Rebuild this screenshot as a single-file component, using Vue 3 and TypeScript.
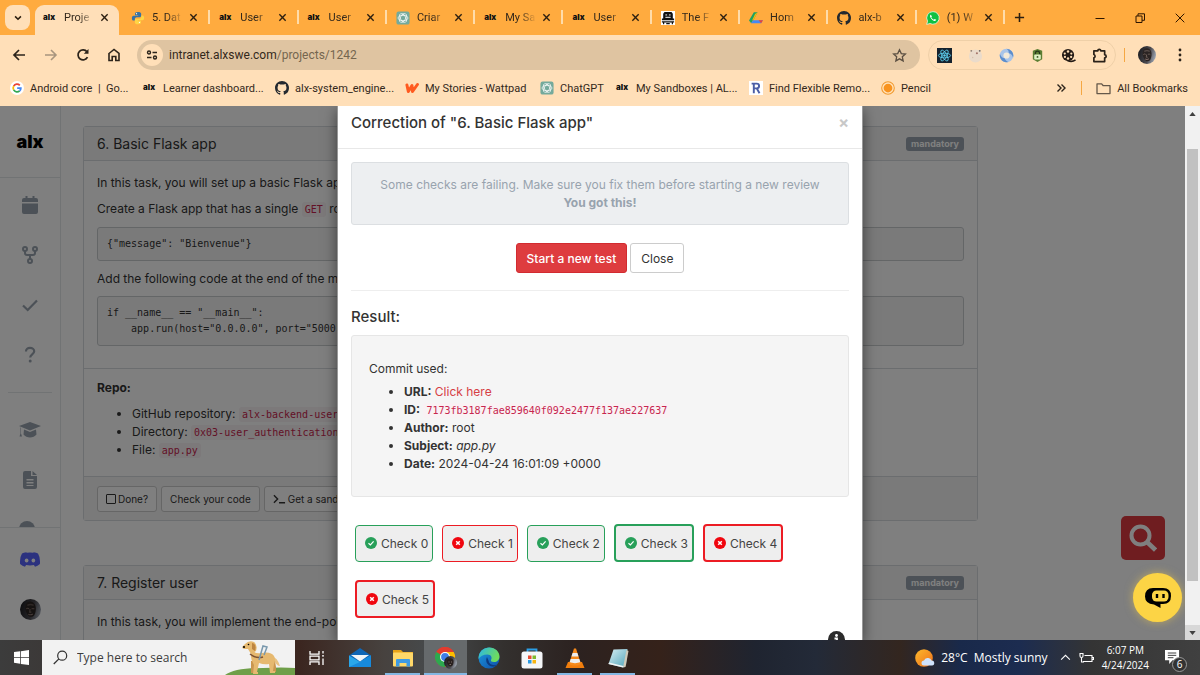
<script setup lang="ts">
import { ref } from 'vue'

interface Tab { icon: string; title: string }
interface Check { label: string; ok: boolean; strong: boolean }

const tabs: Tab[] = [
  { icon: 'alx', title: 'Proje' },
  { icon: 'python', title: '5. Dat' },
  { icon: 'alx', title: 'User' },
  { icon: 'alx', title: 'User' },
  { icon: 'gpt', title: 'Criar' },
  { icon: 'alx', title: 'My Sa' },
  { icon: 'alx', title: 'User' },
  { icon: 'robot', title: 'The F' },
  { icon: 'drive', title: 'Hom' },
  { icon: 'github', title: 'alx-b' },
  { icon: 'whatsapp', title: '(1) W' },
]

const bookmarks: Tab[] = [
  { icon: 'google', title: 'Android core  |  Go...' },
  { icon: 'alx', title: 'Learner dashboard...' },
  { icon: 'github', title: 'alx-system_engine...' },
  { icon: 'wattpad', title: 'My Stories - Wattpad' },
  { icon: 'gpt', title: 'ChatGPT' },
  { icon: 'alx', title: 'My Sandboxes | AL...' },
  { icon: 'remote', title: 'Find Flexible Remo...' },
  { icon: 'pencil', title: 'Pencil' },
]

const extensions: string[] = ['react', 'cookie', 'swirl', 'lock', 'reel', 'puzzle']

const checks: Check[] = [
  { label: 'Check 0', ok: true, strong: false },
  { label: 'Check 1', ok: false, strong: false },
  { label: 'Check 2', ok: true, strong: false },
  { label: 'Check 3', ok: true, strong: true },
  { label: 'Check 4', ok: false, strong: true },
  { label: 'Check 5', ok: false, strong: true },
]

const apps = [
  { icon: 'taskview', name: 'Task View', state: '' },
  { icon: 'mail', name: 'Mail', state: '' },
  { icon: 'explorer', name: 'File Explorer', state: 'open' },
  { icon: 'chrome', name: 'Chrome', state: 'open active' },
  { icon: 'edge', name: 'Edge', state: '' },
  { icon: 'store', name: 'Store', state: '' },
  { icon: 'vlc', name: 'VLC', state: 'open' },
  { icon: 'notepad', name: 'Notepad', state: 'open' },
]

const address = ref('')
const search = ref('')
</script>

<template>
  <div class="screen">
    <svg class="defs" aria-hidden="true">
      <defs>
        <linearGradient id="edgeA" x1="0" y1="0" x2="1" y2="0.4">
          <stop offset="0" stop-color="#2ab6e8" /><stop offset="1" stop-color="#6fdc5c" />
        </linearGradient>
        <linearGradient id="edgeB" x1="0" y1="0" x2="1" y2="1">
          <stop offset="0" stop-color="#1c9be0" /><stop offset="1" stop-color="#0f4ea8" />
        </linearGradient>
        <linearGradient id="sun" x1="0" y1="0" x2="1" y2="1">
          <stop offset="0" stop-color="#fdb92c" /><stop offset="1" stop-color="#ef6f1b" />
        </linearGradient>
        <linearGradient id="note" x1="0" y1="0" x2="1" y2="1">
          <stop offset="0" stop-color="#d9f0f5" /><stop offset="1" stop-color="#4fa3b8" />
        </linearGradient>
        <linearGradient id="face" x1="0" y1="0.3" x2="1" y2="0.6">
          <stop offset="0" stop-color="#1b1b1f" /><stop offset="0.6" stop-color="#4b4a50" /><stop offset="1" stop-color="#a2aab6" />
        </linearGradient>
      </defs>
      <symbol id="python" viewBox="0 0 16 16">
        <path d="M7.900 1C5.500 1 4.600 1.900 4.600 3v1.900h3.600v.6H2.900C1.600 5.500 1 6.700 1 8.200s.7 2.700 1.900 2.700h1.500V9.200c0-1.200 1-2 2.100-2H10c1 0 1.600-.8 1.600-1.700V3c0-1.300-1.400-2-3.700-2z" fill="#3673a5" />
        <path d="M8.100 15c2.400 0 3.300-.9 3.300-2v-1.900H7.800v-.6h5.300c1.300 0 1.900-1.200 1.900-2.700s-.7-2.700-1.900-2.700h-1.300v1.700c0 1.200-1 2-2.100 2H6c-1 0-1.600.8-1.600 1.700V13c0 1.300 1.400 2 3.700 2z" fill="#ffd545" />
        <circle cx="6.300" cy="3" r=".7" fill="#fff" /><circle cx="9.700" cy="13" r=".7" fill="#fff" />
      </symbol>
      <symbol id="gpt" viewBox="0 0 16 16">
        <rect x=".5" y=".5" width="15" height="15" rx="2.500" fill="#74aa9c" />
        <g fill="none" stroke="#fff" stroke-width=".8">
          <ellipse cx="8" cy="8" rx="5.600" ry="3" /><ellipse cx="8" cy="8" rx="5.600" ry="3" transform="rotate(60 8 8)" /><ellipse cx="8" cy="8" rx="5.600" ry="3" transform="rotate(120 8 8)" />
        </g>
      </symbol>
      <symbol id="robot" viewBox="0 0 16 16">
        <rect x="0" y="0" width="16" height="16" fill="#fff" />
        <path d="M4 1h8l1.500 2v5.500h1.500v2H1v-2h1.500V3z" fill="#111" />
        <path d="M5 4.500h2M9 4.500h2M5 7.200h6" stroke="#fff" stroke-width="1.100" />
        <path d="M1 12.500h14M3 12.500V15M13 12.500V15M6 14.500h4" stroke="#111" stroke-width="1.400" />
      </symbol>
      <symbol id="drive" viewBox="0 0 16 16">
        <path d="M5.500 1.500h4.300L5 10.500 2.500 14 0 10.800z" fill="#1ea362" />
        <path d="M9.800 1.500L5 10.500l-1.500.3L7 3.500z" fill="#fbbc04" />
        <path d="M4.700 10.500H16L13.800 14H2.300z" fill="#4688f4" />
        <path d="M11 10.500h5L13.800 14z" fill="#ea4335" />
      </symbol>
      <symbol id="github" viewBox="0 0 16 16">
        <path d="M8 0C3.580 0 0 3.580 0 8c0 3.540 2.290 6.530 5.470 7.590.4.070.55-.17.55-.38 0-.19-.01-.82-.01-1.490-2.010.37-2.530-.49-2.690-.94-.09-.23-.48-.94-.82-1.130-.28-.15-.68-.52-.01-.53.63-.01 1.080.58 1.230.82.72 1.210 1.870.87 2.330.66.07-.52.28-.87.51-1.070-1.780-.2-3.640-.89-3.640-3.950 0-.87.31-1.590.82-2.150-.08-.2-.36-1.020.08-2.120 0 0 .67-.21 2.200.82.64-.18 1.320-.27 2-.27s1.360.09 2 .27c1.530-1.040 2.200-.82 2.200-.82.44 1.100.16 1.920.08 2.120.51.56.82 1.270.82 2.150 0 3.070-1.870 3.750-3.650 3.950.29.25.54.73.54 1.480 0 1.070-.01 1.930-.01 2.200 0 .21.15.46.55.38A8.010 8.010 0 0 0 16 8c0-4.420-3.580-8-8-8z" fill="#24292f" />
      </symbol>
      <symbol id="whatsapp" viewBox="0 0 16 16">
        <path d="M8 .7a7.200 7.200 0 0 0-6.200 10.900L.8 15.300l3.800-1A7.200 7.200 0 1 0 8 .7z" fill="#0fc143" stroke="#fff" stroke-width=".8" />
        <path d="M5.600 4.200c-.8.300-1.300 1.300-.9 2.500.7 2.200 2.500 3.900 4.600 4.600 1.200.3 2.200-.2 2.400-1.200l-1.800-1.100-.9.900C7.800 9.500 6.600 8.400 6 7.100l.8-.9z" fill="#fff" />
      </symbol>
      <symbol id="google" viewBox="0 0 16 16">
        <circle cx="8" cy="8" r="8" fill="#fff" />
        <g fill="none" stroke-width="2">
          <path d="M11.200 4.900A4.400 4.400 0 0 0 4.200 5.800" stroke="#ea4335" /><path d="M4.200 5.800a4.400 4.400 0 0 0 0 4.400" stroke="#fbbc04" /><path d="M4.200 10.200a4.400 4.400 0 0 0 6.800 1.100" stroke="#34a853" /><path d="M11 11.300A4.400 4.400 0 0 0 12.400 8H8.200" stroke="#4285f4" />
        </g>
      </symbol>
      <symbol id="wattpad" viewBox="0 0 16 16">
        <path d="M2.200 4.500L3.800 12 8 5.200l.6 6.800 5.600-8" fill="none" stroke="#ff5a1f" stroke-width="3.400" stroke-linejoin="round" stroke-linecap="round" />
      </symbol>
      <symbol id="remote" viewBox="0 0 16 16">
        <rect x="0" y="0" width="16" height="16" fill="#fff" />
        <path d="M5.500 14V3h3.300a2.700 2.700 0 0 1 0 5.400H5.500M8.800 8.400L12 14M3 3h3" fill="none" stroke="#4b5ea6" stroke-width="2.200" />
      </symbol>
      <symbol id="pencil" viewBox="0 0 16 16">
        <circle cx="8" cy="8" r="7.200" fill="#ffe3bd" stroke="#f29a2e" stroke-width="1.200" /><circle cx="8" cy="8" r="5" fill="#f8931f" />
      </symbol>
      <symbol id="react" viewBox="0 0 16 16">
        <rect x="0" y="0" width="16" height="16" fill="#15222e" />
        <g fill="none" stroke="#5fd3f3" stroke-width=".9"><ellipse cx="8" cy="8" rx="6.500" ry="2.500" /><ellipse cx="8" cy="8" rx="6.500" ry="2.500" transform="rotate(60 8 8)" /><ellipse cx="8" cy="8" rx="6.500" ry="2.500" transform="rotate(120 8 8)" /></g>
        <circle cx="8" cy="8" r="1.300" fill="#5fd3f3" />
      </symbol>
      <symbol id="cookie" viewBox="0 0 16 16">
        <circle cx="8" cy="8.500" r="7" fill="#eadbcb" /><circle cx="3.500" cy="3" r="1" fill="#8c7f78" /><circle cx="9.500" cy="5.500" r="1.100" fill="#a4756a" /><circle cx="12.500" cy="3" r="1" fill="#6d6a6a" /><circle cx="5" cy="10" r=".8" fill="#d7c2ad" />
      </symbol>
      <symbol id="swirl" viewBox="0 0 16 16">
        <circle cx="8" cy="8" r="7.300" fill="#a9c4e8" /><circle cx="8" cy="8" r="3.300" fill="#f4ead9" />
        <path d="M8 .7A7.300 7.300 0 0 1 15 10c-1-3-3-4-4.500-4.300C10.500 3.500 10 2 8 .7zM1 6.500c1 3 3 4.500 5 4.500 1 2.500 2.500 3.500 4 4A7.300 7.300 0 0 1 1 6.500z" fill="#5d8dcb" />
      </symbol>
      <symbol id="lock" viewBox="0 0 16 16">
        <path d="M3 3l5-2 5 2v9l-5 3-5-3z" fill="#5c7e33" /><path d="M5.800 7V5.500a2.200 2.200 0 0 1 4.400 0V7" fill="none" stroke="#26351a" stroke-width="1.300" /><rect x="4.500" y="7" width="7" height="5.200" rx="1" fill="#dff0c4" /><circle cx="8" cy="9.500" r="1" fill="#3a5520" />
      </symbol>
      <symbol id="reel" viewBox="0 0 16 16">
        <circle cx="7.500" cy="7.500" r="6.500" fill="#241b16" /><path d="M7 13.300c3 1.500 6 1.200 8.500-.7" stroke="#241b16" stroke-width="1.800" fill="none" />
        <g fill="#ffdfb8"><circle cx="7.500" cy="3.800" r="1.300" /><circle cx="7.500" cy="11.200" r="1.300" /><circle cx="4" cy="5.900" r="1.200" /><circle cx="11" cy="5.900" r="1.200" /><circle cx="4.200" cy="9.500" r="1.200" /><circle cx="10.800" cy="9.500" r="1.200" /></g>
      </symbol>
      <symbol id="puzzle" viewBox="0 0 16 16">
        <path d="M2 3h4.200a1.600 1.600 0 0 1 3.200 0H13.500v4.200a1.600 1.600 0 0 1 0 3.200V14.500H2v-4a1.900 1.900 0 0 0 0-3.600z" fill="none" stroke="#2a2118" stroke-width="1.800" stroke-linejoin="round" />
      </symbol>
      <symbol id="avatar" viewBox="0 0 20 20">
        <circle cx="10" cy="10" r="10" fill="url(#face)" />
        <path d="M5 8c0-4 2.500-6 5.500-5.500S15.500 6 15 10.500s-2 6.500-4.500 6.500S5 12.500 5 8z" fill="#2b2423" />
        <path d="M6 9.500c1-1 2-.6 2.600 0M11 9.500c1-.7 2-.6 2.700.2M9.600 9.500l-.4 3h1.600" fill="none" stroke="#75655f" stroke-width="1" />
        <path d="M8 14.500q2 1.200 4.200-.2" fill="none" stroke="#8c7770" stroke-width="1" />
        <path d="M7 6q3-1.600 6 0" fill="none" stroke="#5b4f4b" stroke-width="1.400" />
      </symbol>
      <symbol id="ok" viewBox="0 0 12 12"><circle cx="6" cy="6" r="6" fill="#28a05a" /><path d="M3.500 6.200l1.900 1.700 3.200-3.500" fill="none" stroke="#fff" stroke-width="1.200" /></symbol>
      <symbol id="fail" viewBox="0 0 12 12"><circle cx="6" cy="6" r="6" fill="#f0060f" /><path d="M4.200 4.200l3.600 3.600M7.800 4.200L4.200 7.800" stroke="#fff" stroke-width="1.500" /></symbol>
      <symbol id="taskview" viewBox="0 0 22 22">
        <path d="M4 4v3.200h9V4M4 18v-3.200h9V18M4 9.200h9v3.600H4zM17 4v2.500M17 11.500V18M16 8.800h2" fill="none" stroke="#fff" stroke-width="1.300" />
      </symbol>
      <symbol id="mail" viewBox="0 0 22 22">
        <path d="M0 8.500L11 1l11 7.500V20H0z" fill="#1066b5" /><path d="M0 8.500l11 6.500 11-6.500V20H0z" fill="#2aa6ea" /><path d="M22 8.500V20H0l11-5z" fill="#1789dc" /><path d="M2 8h18l-9 6.500z" fill="#f1f5f8" />
      </symbol>
      <symbol id="explorer" viewBox="0 0 22 22">
        <path d="M1 3h8l2 2h10v4H1z" fill="#e8a317" /><rect x="1" y="5.500" width="20" height="14" rx="1" fill="#ffd869" /><path d="M4 19.500v-6.500q0-1 1-1h12q1 0 1 1v6.500h-3.500v-3.500h-7v3.500z" fill="#3f9be3" />
      </symbol>
      <symbol id="chrome" viewBox="0 0 22 22">
        <circle cx="10" cy="10" r="10" fill="#e33b2e" /><path d="M10 10L1.300 5A10 10 0 0 0 10 20l4.500-8z" fill="#2da94f" /><path d="M10 20a10 10 0 0 0 8.700-15H10l4.300 7.500z" fill="#fdbd00" /><path d="M1.300 5A10 10 0 0 1 18.700 5H10z" fill="#e33b2e" />
        <circle cx="10" cy="10" r="5" fill="#fff" /><circle cx="10" cy="10" r="3.900" fill="#3f7ee8" /><circle cx="15.500" cy="15.500" r="6.500" fill="url(#face)" /><path d="M12 15a3.300 3.300 0 1 1 6.500 0c0 3-1.500 4.500-3 4.500s-3.500-2-3.500-4.500z" fill="#29211f" /><path d="M13.500 15h1M16 15h1M14.500 17.500h1.500" stroke="#94847d" stroke-width=".8" />
      </symbol>
      <symbol id="edge" viewBox="0 0 22 22">
        <circle cx="11" cy="11" r="10.500" fill="url(#edgeB)" />
        <path d="M.6 10C1.500 4 6 .5 11.300.5 17.500.5 21.500 5 21.500 9.500c0 3.500-2.500 5.500-5.500 5.500-2.500 0-3.500-1-3-2 1.500-2.500 0-5.500-3.500-5.500C5 7.500 2 9.500.6 12z" fill="url(#edgeA)" />
        <path d="M9 10c-2 4 0 8.500 5 9.500 2 .3 4-.5 5.500-2-4 1.500-8.500.5-9-4z" fill="#0c3b80" />
      </symbol>
      <symbol id="store" viewBox="0 0 22 22">
        <path d="M6.500 6V2.500h9V6" fill="none" stroke="#2b9fe6" stroke-width="1.800" /><rect x=".5" y="4.500" width="21" height="17" rx="2.500" fill="#f4f6f8" />
        <path d="M7 8.500h3.500V12H7z" fill="#e84b31" /><path d="M11.500 8.500H15V12h-3.500z" fill="#7cb92e" /><path d="M7 13h3.500v3.500H7z" fill="#2a9be4" /><path d="M11.500 13H15v3.500h-3.500z" fill="#f7b511" />
      </symbol>
      <symbol id="vlc" viewBox="0 0 22 22">
        <path d="M4 15h14l2.500 6h-19z" fill="#f07d0c" /><path d="M10 1.500h2L17 17c-3 2-9 2-12 0z" fill="#f68a1c" /><path d="M8.600 6h4.800l1.100 3.500h-7zM6.700 12h8.600l1 3c-3 1.500-7.600 1.500-10.600 0z" fill="#eceef0" />
      </symbol>
      <symbol id="notepad" viewBox="0 0 22 22">
        <path d="M6.500 2.500L20.500 2 19 18l-3 2.500L1.500 17z" fill="url(#note)" /><path d="M19.500 3l2 1-3 16-2.500.5z" fill="#cfc9b8" /><path d="M1.500 17l14.500 3.500.5-1.500L2 15.500z" fill="#f2f4f4" />
      </symbol>
    </svg>

    <header class="browser">
      <div class="tabstrip">
        <button class="tabsearch" aria-label="Search tabs"><svg viewBox="0 0 12 12" width="10" height="10"><path d="M2.500 4L6 7.500 9.500 4" fill="none" stroke="#2c1f10" stroke-width="1.900" /></svg></button>
        <nav class="tabs" aria-label="Tabs">
          <div v-for="(t, i) in tabs" :key="i" class="tab" :class="{ current: i === 0 }">
            <span v-if="t.icon === 'alx'" class="alx fav">alx</span>
            <svg v-else class="fav"><use :href="'#' + t.icon" /></svg>
            <span class="tabtitle">{{ t.title }}</span>
            <button class="plain" aria-label="Close tab"><svg viewBox="0 0 10 10" width="9" height="9"><path d="M1.500 1.500l7 7M8.500 1.500l-7 7" stroke="#2c1f10" stroke-width="1.500" /></svg></button>
          </div>
        </nav>
        <button class="plain newtab" aria-label="New tab"><svg viewBox="0 0 12 12" width="11" height="11"><path d="M6 1v10M1 6h10" stroke="#2c1f10" stroke-width="1.700" /></svg></button>
        <div class="winctl">
          <button class="plain" aria-label="Minimize"><svg viewBox="0 0 10 10" width="10" height="10"><path d="M.5 5.500h9" stroke="#2c1500" /></svg></button>
          <button class="plain" aria-label="Restore"><svg viewBox="0 0 10 10" width="10" height="10"><path d="M1 3h6v6.500H1zM3 3V.8h6.500v6.500H7" fill="none" stroke="#2c1500" /></svg></button>
          <button class="plain" aria-label="Close"><svg viewBox="0 0 10 10" width="10" height="10"><path d="M.7.7l8.600 8.600M9.300.7L.7 9.300" stroke="#2c1500" /></svg></button>
        </div>
      </div>

      <div class="toolbar">
        <div class="navbtns">
          <button class="plain" aria-label="Back"><svg viewBox="0 0 14 14" width="14" height="14"><path d="M13 7H2M7 2L2 7l5 5" fill="none" stroke="#2c241b" stroke-width="1.700" /></svg></button>
          <button class="plain" aria-label="Forward"><svg viewBox="0 0 14 14" width="14" height="14"><path d="M1 7h11M7 2l5 5-5 5" fill="none" stroke="#a8957e" stroke-width="1.600" /></svg></button>
          <button class="plain" aria-label="Reload"><svg viewBox="0 0 14 14" width="14" height="14"><path d="M11.500 9.200A5 5 0 1 1 11 3.800" fill="none" stroke="#2c241b" stroke-width="1.700" /><path d="M12.500 1v4.700H7.800z" fill="#2c241b" /></svg></button>
          <button class="plain" aria-label="Home"><svg viewBox="0 0 14 14" width="14" height="14"><path d="M2 5.500L7 1.500l5 4v7H8.800V8.500H5.200v4H2z" fill="none" stroke="#2c241b" stroke-width="1.600" /></svg></button>
        </div>
        <div class="omnibox">
          <button class="siteinfo" aria-label="Site information"><svg viewBox="0 0 12 12" width="12" height="12"><g fill="none" stroke="#2c241b" stroke-width="1.400"><circle cx="3" cy="3.500" r="1.500" /><path d="M6.500 3.500H11M1 8.500h4.500" /><circle cx="9" cy="8.500" r="1.500" /></g></svg></button>
          <label class="url"><span class="host">intranet.alxswe.com</span>/projects/1242<input v-model="address" class="ghost" aria-label="Address" /></label>
          <button class="plain star" aria-label="Bookmark"><svg viewBox="0 0 16 16" width="15" height="15"><path d="M8 1.800l1.900 4.100 4.400.5-3.300 3 .9 4.400L8 11.600l-3.900 2.200.9-4.400-3.300-3 4.400-.5z" fill="none" stroke="#5b4f42" stroke-width="1.400" /></svg></button>
        </div>
        <div class="exts">
          <button v-for="e in extensions" :key="e" class="plain" :aria-label="e"><svg width="15" height="15"><use :href="'#' + e" /></svg></button>
        </div>
        <span class="bar"></span>
        <button class="plain profile" aria-label="Profile"><svg width="18" height="18"><use href="#avatar" /></svg></button>
        <button class="plain kebab" aria-label="Menu"><svg viewBox="0 0 4 14" width="4" height="14"><g fill="#2c241b"><circle cx="2" cy="2" r="1.400" /><circle cx="2" cy="7" r="1.400" /><circle cx="2" cy="12" r="1.400" /></g></svg></button>
      </div>

      <nav class="bookmarks" aria-label="Bookmarks">
        <div class="marks">
          <a v-for="(b, i) in bookmarks" :key="i" href="#" class="mark">
            <span v-if="b.icon === 'alx'" class="alx fav">alx</span>
            <svg v-else class="fav"><use :href="'#' + b.icon" /></svg>
            <span class="pre">{{ b.title }}</span>
          </a>
        </div>
        <button class="plain more" aria-label="More bookmarks"><svg viewBox="0 0 10 10" width="10" height="10"><path d="M1.500 1.500L5 5 1.500 8.500M5.500 1.500L9 5 5.500 8.500" fill="none" stroke="#2c241b" stroke-width="1.400" /></svg></button>
        <span class="bar"></span>
        <a href="#" class="mark all"><svg viewBox="0 0 16 14" width="15" height="13"><path d="M1 2h5l1.500 1.800H15V12.500H1z" fill="none" stroke="#65584a" stroke-width="1.400" stroke-linejoin="round" /></svg>All Bookmarks</a>
      </nav>
    </header>

    <div class="page">
      <div class="view">
        <aside class="side">
          <div class="brand alx">alx</div>
          <div class="sideicons">
            <a href="#" aria-label="Planning"><svg viewBox="0 0 16 18" width="16" height="18"><path d="M3.500 0h2v2h5V0h2v2H14a2 2 0 0 1 2 2v2H0V4a2 2 0 0 1 2-2h1.500zM0 7.500h16V16a2 2 0 0 1-2 2H2a2 2 0 0 1-2-2z" /></svg></a>
            <a href="#" aria-label="Projects"><svg viewBox="0 0 16 18" width="16" height="18"><g fill="none" stroke="#98a3ae" stroke-width="2"><circle cx="3" cy="3" r="2" /><circle cx="13" cy="3" r="2" /><circle cx="8" cy="15" r="2" /><path d="M3 5v2q0 2 2 2h6q2 0 2-2V5M8 9v4" /></g></svg></a>
            <a href="#" aria-label="Reviews"><svg viewBox="0 0 16 18" width="16" height="18"><path d="M1 9.500l4.700 4.500L15 4.500" fill="none" stroke="#98a3ae" stroke-width="2.200" /></svg></a>
            <a href="#" aria-label="Help"><svg viewBox="0 0 16 18" width="16" height="18"><path d="M4 5.500C4 3 5.700 1.800 8 1.800s4.200 1.400 4.200 3.500c0 3-4 3.200-4 6.200" fill="none" stroke="#98a3ae" stroke-width="2.200" /><circle cx="8.200" cy="15" r="1.500" /></svg></a>
          </div>
          <hr class="siderule" />
          <div class="sideicons lower">
            <a href="#" aria-label="Curriculum"><svg viewBox="0 0 22 18" width="22" height="18"><path d="M11 1l11 4-11 4.500L0 5zM5 8.500l6 2.500 6-2.500 .5 5q-2.500 3-6.500 3t-6.500-3zM2 6.500v6l1 3H.5l1-3v-6z" /></svg></a>
            <a href="#" aria-label="Concepts"><svg viewBox="0 0 14 18" width="14" height="18"><path d="M2 0h6v5h6v11a2 2 0 0 1-2 2H2a2 2 0 0 1-2-2V2a2 2 0 0 1 2-2zM9.500 0L14 4H9.500zM3.500 8v1.500h7V8zm0 3v1.500h7V11zm0 3v1h7v-1z" fill-rule="evenodd" /></svg></a>
            <a href="#" aria-label="Conferences"><svg viewBox="0 0 22 18" width="22" height="18"><circle cx="8" cy="8" r="8" /><circle cx="16" cy="12" r="6" /></svg></a>
          </div>
          <div class="sidefoot">
            <a href="#" aria-label="Discord"><svg viewBox="0 0 22 16" width="20" height="15"><path d="M7.500.5L6.800 0Q4 .5 2.200 1.500-.5 6 .1 13q2.500 2.200 5.400 3l1.200-2q4.300 1 8.600 0l1.200 2q2.900-.8 5.400-3 .6-7-2.100-11.500Q18 .5 15.200 0l-.7.500Q11 0 7.500.5z" fill="#5865ff" /><ellipse cx="7.300" cy="9" rx="2" ry="2.200" fill="#fff" /><ellipse cx="14.700" cy="9" rx="2" ry="2.200" fill="#fff" /></svg></a>
            <a href="#" aria-label="Profile"><svg width="21" height="21"><use href="#avatar" /></svg></a>
          </div>
        </aside>

        <main class="tasks">
          <section class="card">
            <div class="cardhead"><h3>6. Basic Flask app</h3><span class="badge">mandatory</span></div>
            <div class="cardbody">
              <p>In this task, you will set up a basic Flask app.</p>
              <p>Create a Flask app that has a single <code>GET</code> route</p>
              <pre>{"message": "Bienvenue"}</pre>
              <p class="late">Add the following code at the end of the module:</p>
              <pre>if __name__ == "__main__":
    app.run(host="0.0.0.0", port="5000")</pre>
            </div>
            <div class="repo">
              <strong>Repo:</strong>
              <ul>
                <li>GitHub repository: <code>alx-backend-user-data</code></li>
                <li>Directory: <code>0x03-user_authentication_service</code></li>
                <li>File: <code>app.py</code></li>
              </ul>
            </div>
            <div class="cardfoot">
              <label class="small"><input type="checkbox" />Done?</label>
              <button class="small">Check your code</button>
              <button class="small"><svg viewBox="0 0 14 10" width="13" height="10"><path d="M1 1l4 4-4 4M6.500 9H13" fill="none" stroke="#333" stroke-width="1.500" /></svg>Get a sandbox</button>
            </div>
          </section>
          <section class="card">
            <div class="cardhead"><h3>7. Register user</h3><span class="badge">mandatory</span></div>
            <div class="cardbody"><p>In this task, you will implement the end-point to register a user.</p></div>
          </section>
        </main>
        <button class="find" aria-label="Search"><svg viewBox="0 0 28 28" width="28" height="28"><circle cx="11.500" cy="11.500" r="9" fill="none" stroke="#fff" stroke-width="4" /><path d="M18 18l8.500 8" stroke="#fff" stroke-width="4.500" /></svg></button>
      </div>

      <div class="scroll" aria-hidden="true">
        <span class="arrow"><svg viewBox="0 0 8 5" width="7" height="4"><path d="M4 0l4 5H0z" fill="#404040" /></svg></span>
        <span class="rail"><span class="thumb"></span></span>
        <span class="arrow down"><svg viewBox="0 0 8 5" width="7" height="4"><path d="M0 0h8L4 5z" fill="#404040" /></svg></span>
      </div>

      <div class="overlay">
        <div class="modal" role="dialog" aria-labelledby="mtitle">
          <div class="mhead"><h2 id="mtitle">Correction of "6. Basic Flask app"</h2><button class="plain mclose" aria-label="Close">×</button></div>
          <div class="mbody">
            <div class="alert">Some checks are failing. Make sure you fix them before starting a new review<br /><strong>You got this!</strong></div>
            <div class="actions"><button class="btn primary">Start a new test</button><button class="btn">Close</button></div>
            <hr />
            <h3>Result:</h3>
            <div class="well">
              <span>Commit used:</span>
              <ul>
                <li><strong>URL:</strong> <a href="#">Click here</a></li>
                <li><strong>ID:</strong> <code>7173fb3187fae859640f092e2477f137ae227637</code></li>
                <li><strong>Author:</strong> root</li>
                <li><strong>Subject:</strong> <em>app.py</em></li>
                <li><strong>Date:</strong> 2024-04-24 16:01:09 +0000</li>
              </ul>
            </div>
            <div class="checks">
              <button v-for="c in checks" :key="c.label" class="check" :class="{ ok: c.ok, strong: c.strong }">
                <svg width="12" height="12"><use :href="c.ok ? '#ok' : '#fail'" /></svg>{{ c.label }}
              </button>
            </div>
          </div>
          <button class="info" aria-label="Information"><svg viewBox="0 0 17 17" width="17" height="17"><circle cx="8.500" cy="4.500" r="1.400" fill="#fff" /><path d="M6.500 7.500h2.500v5M6.500 12.500h5" fill="none" stroke="#fff" stroke-width="1.800" /></svg></button>
        </div>
      </div>
      <button class="chat" aria-label="Chat"><svg viewBox="0 0 26 20" width="26" height="20"><path d="M8 0h10q8 0 8 8t-8 8h-2.500v4L9 16.500Q0 15.500 0 8.500 0 0 8 0z" /><rect x="7" y="2.500" width="16.500" height="11" rx="4.500" fill="#fcd445" /><path d="M12 6v4M18.500 6v4" stroke="#000" stroke-width="2.400" /></svg></button>
    </div>

    <footer class="taskbar">
      <button class="plain start" aria-label="Start"><svg viewBox="0 0 16 16" width="15" height="15"><path d="M0 2.200l6.600-.9v6.200H0zM7.400 1.200L16 0v7.500H7.400zM0 8.300h6.600v6.300L0 13.700zM7.400 8.300H16V16l-8.600-1.200z" fill="#fff" /></svg></button>
      <label class="winsearch">
        <svg viewBox="0 0 16 16" width="15" height="15"><circle cx="9.800" cy="6" r="4.800" fill="none" stroke="#333" stroke-width="1.300" /><path d="M6.300 9.500L.8 15" stroke="#333" stroke-width="1.400" /></svg>
        <input v-model="search" placeholder="Type here to search" aria-label="Type here to search" />
        <svg viewBox="0 0 70 35" width="70" height="35">
          <path d="M0 35Q10 28 38 28q20-1 32 0v7z" fill="#6f9f49" />
          <path d="M46 17q6-1 9 9-3 0-5-4z" fill="#e9c384" />
          <path d="M26 21h5l-1 12h-4zM44 21h6l1 6v5h-4l-1-5z" fill="#c9964f" />
          <path d="M27 10q3 4 9 3 10-2 13 3 2 4 0 8l-1 7h2v2h-5l-1-9q-5 1-10-1l-2 9h1v2h-5l1-9q-5-7-2-15z" fill="#e6b970" />
          <path d="M20 4q4-4 9-2 4 3 2 9l-5 3-3-5-4 0q-3-1-1-3z" fill="#e6b970" />
          <path d="M27 3q5 1 3 8l-3-2z" fill="#bd8440" /><path d="M25 14q6 5 13 3" fill="none" stroke="#7e5232" stroke-width="1.500" />
          <path d="M34 20l4-14 4 1-3 8" fill="none" stroke="#7898ad" stroke-width="1.500" />
          <circle cx="23.500" cy="4.500" r=".8" /><circle cx="19" cy="7" r="1.100" />
        </svg>
      </label>
      <div class="apps">
        <button v-for="a in apps" :key="a.icon" class="plain app" :class="a.state" :aria-label="a.name"><svg width="22" height="22"><use :href="'#' + a.icon" /></svg></button>
      </div>
      <div class="tray">
        <a href="#" class="weather"><svg viewBox="0 0 20 18" width="20" height="18"><circle cx="9" cy="9" r="8.800" fill="url(#sun)" /><path d="M9 16.500a2.500 2.500 0 0 1 0-5q1-3 4-2.500 2.500-.3 3.500 2.500a2.500 2.500 0 0 1 .5 5z" fill="#cfe2fb" /></svg><span>28°C</span><span>Mostly sunny</span></a>
        <button class="plain" aria-label="Show hidden icons"><svg viewBox="0 0 12 8" width="11" height="7"><path d="M1 6.500l5-5 5 5" fill="none" stroke="#fff" stroke-width="1.200" /></svg></button>
        <button class="plain" aria-label="Battery"><svg viewBox="0 0 15 12" width="15" height="12"><path d="M5.500 3.500H13v6H4M13.500 5.500h1v2h-1M2.500 5.500V10H5M1 1.500h3v2.500q0 1.500-1.500 1.500T1 4z" fill="none" stroke="#fff" stroke-width="1.100" /></svg></button>
        <div class="clock"><span>6:07 PM</span><span>4/24/2024</span></div>
        <button class="plain notif" aria-label="Notifications"><svg viewBox="0 0 16 16" width="15" height="15"><path d="M0 0h15v11H8l-3.500 4V11H0z" fill="#fff" /><path d="M3 3.200h9M3 5.700h9M3 8.200h6" stroke="#333" stroke-width="1" /></svg><span class="count">6</span></button>
      </div>
    </footer>
  </div>
</template>

<style>
body { margin: 0; overflow: hidden; }
</style>

<style scoped>
* { box-sizing: border-box; }
.screen { display: flex; flex-direction: column; height: 100vh; overflow: hidden; font-family: Inter, "Liberation Sans", sans-serif; color: #333; }
.defs { position: absolute; width: 0; height: 0; }
svg { display: block; flex: none; }
button { font-family: inherit; cursor: pointer; }
.plain { display: grid; place-items: center; border: 0; padding: 0; background: none; color: inherit; }
a { color: inherit; text-decoration: none; }
.alx { font-family: Inter, sans-serif; font-weight: 900; color: #111; }

/* browser */
.browser { font-family: Roboto, "Open Sans", sans-serif; font-size: 11px; color: #33281b; background: #ffdfb8; flex: none; }
.tabstrip { display: flex; height: 35px; background: #ffab3f; padding-left: 5px; }
.tabsearch { flex: none; width: 25px; height: 25px; margin: 5px 5px 0 0; border: 0; padding: 0; border-radius: 8px; background: #ffdfb8; display: grid; place-items: center; }
.tabs { display: flex; flex: 0 1 971px; min-width: 0; }
.tab { position: relative; display: flex; align-items: center; flex: 1 1 0; min-width: 0; height: 35px; padding: 0 13px 0 8px; }
.tab + .tab::after { content: ""; position: absolute; right: 1px; top: 10px; width: 2px; height: 14px; background: #ffdcaa; }
.tab.current { height: 30px; margin: 5px 4px 0 0; padding: 0 10px 5px 8px; background: #ffdfb8; border-radius: 9px 9px 0 0; flex: 0 0 84px; }
.fav { flex: none; width: 14px; height: 14px; }
.alx.fav { font-size: 8px; line-height: 13px; }
.tabtitle { flex: 1; min-width: 0; margin: 0 4px 0 7px; white-space: nowrap; mask-image: linear-gradient(90deg, #000 45%, transparent 95%); }
.newtab { width: 27px; flex: none; }
.winctl { display: flex; margin-left: auto; flex: none; }
.winctl button { width: 40px; }
.toolbar { display: flex; align-items: center; height: 40px; padding-right: 18px; }
.navbtns { display: flex; padding-left: 3px; margin-right: 8px; }
.navbtns button { width: 32px; height: 30px; }
.navbtns button:nth-child(n+3) { width: 31px; }
.omnibox { display: flex; align-items: center; flex: 1; min-width: 0; height: 30px; border-radius: 15px; background: #dfc4a1; padding: 0 13px 0 4px; }
.siteinfo { width: 22px; height: 22px; flex: none; border: 0; padding: 0; border-radius: 50%; background: #ffdfb8; display: grid; place-items: center; }
.url { display: flex; flex: 1; min-width: 0; margin-left: 6px; font-size: 12px; color: #75664f; white-space: nowrap; }
.host { color: #33281b; }
.ghost { flex: 1; min-width: 0; border: 0; padding: 0; background: none; outline: 0; font: inherit; }
.exts { display: flex; width: 188px; margin: 0 8px 0 8px; height: 30px; border: 1px solid #efd0a8; border-radius: 15px; }
.exts button { flex: 1; }
.bar { width: 1px; height: 14px; background: #f5a742; flex: none; }
.profile { margin: 0 22px 0 13px; }
.bookmarks { display: flex; align-items: center; height: 31px; padding: 0 12px 5px 10px; }
.marks { display: grid; grid-template-columns: 133px 132px 130px 135px 76px 133px 132px auto; flex: 1; min-width: 0; }
.mark { display: flex; align-items: center; gap: 6px; white-space: nowrap; }
.pre { white-space: pre; }
.more { margin-right: 15px; }
.all { margin-left: 14px; }

/* page behind the dialog */
.page { position: relative; display: flex; flex: 1; min-height: 0; overflow: hidden; background: #fff; font-size: 12px; line-height: 18px; }
.view { position: relative; display: flex; flex: 1; min-width: 0; overflow: hidden; }
.side { display: flex; flex-direction: column; flex: none; width: 61px; border-right: 1px solid #e3e6e8; }
.brand { height: 72px; flex: none; border-bottom: 1px solid #e3e6e8; display: grid; place-items: center; font-size: 18px; color: #000; }
.sideicons { display: flex; flex-direction: column; align-items: center; gap: 32px; padding-top: 18px; fill: #98a3ae; }
.siderule { width: 44px; margin: 28px auto 0; border: 0; border-top: 1px solid #e3e6e8; flex: none; }
.lower { padding-top: 28px; flex: 1; min-height: 0; overflow: hidden; }
.sidefoot { flex: none; height: 113px; border-top: 1px solid #e3e6e8; display: flex; flex-direction: column; align-items: center; gap: 32px; padding-top: 24px; }
.tasks { flex: 0 1 939px; min-width: 0; padding: 20px 22px 0; }
.card { border: 1px solid #d7dbde; border-radius: 3px; margin-bottom: 44px; }
.cardhead { display: flex; align-items: center; justify-content: space-between; height: 34px; padding: 0 13px; background: #f5f5f5; border-bottom: 1px solid #d7dbde; }
.cardhead h3 { margin: 0; font-size: 14px; font-weight: 400; }
.badge { background: #98a3ae; color: #fff; border-radius: 3px; font-size: 9px; line-height: 14px; font-weight: 700; padding: 0 5px; }
.cardbody { padding: 13px 13px 22px; }
.card p { margin: 0 0 8px; white-space: nowrap; }
.card .late { margin-top: 9px; }
pre, code { font-family: "DejaVu Sans Mono", monospace; font-size: 10px; }
pre { margin: 0; padding: 8px 9px; border: 1px solid #c9cccf; border-radius: 3px; background: #f5f5f5; line-height: 16px; }
code { color: #c7254e; background: #f9f2f4; border-radius: 3px; padding: 2px 3px; }
.repo { border-top: 1px solid #d7dbde; padding: 10px 13px 17px; white-space: nowrap; }
ul { margin: 8px 0 0; padding-left: 35px; }
li { height: 18px; }
.cardfoot { display: flex; gap: 4px; padding: 9px 13px 8px; background: #f5f5f5; border-top: 1px solid #d7dbde; white-space: nowrap; }
.small { display: flex; align-items: center; gap: 2px; height: 26px; padding: 0 8px; border: 1px solid #ccc; border-radius: 3px; background: #fff; color: #333; font-size: 10px; }
.small input { appearance: none; width: 10px; height: 10px; margin: 0; border: 1px solid #333; border-radius: 1px; }
.find { position: absolute; right: 20px; bottom: 80px; width: 44px; height: 44px; border: 0; padding: 0; border-radius: 5px; background: #de3a40; display: grid; place-items: center; }
.scroll { position: relative; z-index: 2; display: flex; flex-direction: column; flex: none; width: 15px; background: #f1f1f1; }
.arrow { display: grid; place-items: center; height: 15px; flex: none; }
.arrow.down { background: #d8d8d8; }
.rail { flex: 1; display: flex; flex-direction: column; padding: 28px 2px 44px; }
.thumb { flex: 1; background: #c1c1c1; }

/* dialog */
.overlay { position: absolute; inset: 0; background: rgba(0, 0, 0, .5); display: flex; justify-content: center; }
.modal { position: relative; width: 526px; max-width: 100%; background: #fff; border: 1px solid rgba(0, 0, 0, .4); border-width: 0 1px; box-shadow: 0 4px 13px rgba(0, 0, 0, .5); }
.mhead { display: flex; justify-content: space-between; height: 43px; padding: 6px 13px 0; border-bottom: 1px solid #e8e8e8; }
.mhead h2 { margin: 0; font-size: 15px; line-height: 22px; font-weight: 500; }
.mclose { align-self: flex-start; height: 14px; font-size: 16px; font-weight: 700; color: #c8c8c8; }
.mbody { padding: 13px 13px 0; }
.alert { padding: 13px 12px 12px; border: 1px solid #dcdfe2; border-radius: 3px; background: #edeff1; color: #98a3ae; text-align: center; }
.actions { display: flex; justify-content: center; gap: 3px; margin: 18px 0 17px; }
.btn { height: 30px; padding: 0 10px; border: 1px solid #ccc; border-radius: 3px; background: #fff; color: #333; font-size: 12px; }
.primary { background: #de3c3f; border-color: #d22b30; color: #fff; font-weight: 500; }
hr { margin: 0; border: 0; border-top: 1px solid #eee; }
.mbody h3 { margin: 16px 0 8px; font-size: 15px; line-height: 20px; font-weight: 500; }
.well { padding: 24px 17px 23px; border: 1px solid #e6e6e6; border-radius: 3px; background: #f5f5f5; }
.well ul { margin-top: 5px; }
.well a { color: #d64045; }
.checks { display: flex; flex-wrap: wrap; align-items: center; gap: 18px 9px; padding: 27px 4px 0; }
.check { display: flex; align-items: center; gap: 4px; height: 38px; padding: 0 4px 0 9px; border: 1px solid #ec1c24; border-radius: 4px; background: #eee; color: #444; font-size: 12px; outline: 0; }
.check.ok { border-color: #28a05a; }
.check.strong { border-width: 2px; }
.check:not(.strong) { height: 37px; }
.info { position: absolute; right: 17px; bottom: -8px; width: 17px; height: 17px; border: 0; padding: 0; border-radius: 50%; background: #2b2b2b; }
.chat { position: absolute; right: 18px; bottom: 18px; z-index: 1; width: 49px; height: 49px; border: 0; padding: 0; border-radius: 50%; background: #fcd445; box-shadow: 0 0 9px rgba(252, 212, 69, .5); display: grid; place-items: center; }

/* taskbar */
.taskbar { display: flex; flex: none; height: 35px; color: #fff; font-family: "Open Sans", "Noto Sans", sans-serif; background: linear-gradient(90deg, #3c3c3c 0, #3b2620 25%, #47423f 32%, #464a4c 36%, #33302e 42%, #2c2220 48%, #35221a 55%, #1f2430 63%, #232a38 68%, #33261f 75%, #19294a 80%, #1c2c50 85%, #343434 91%, #404040 100%); }
.start { width: 42px; }
.winsearch { display: flex; align-items: center; width: 253px; padding-left: 11px; background: #f2f2f2; }
.winsearch input { flex: 1; min-width: 0; border: 0; padding: 0; margin-left: 9px; background: none; outline: 0; font: 12px "Open Sans", "Noto Sans", sans-serif; }
.winsearch input::placeholder { color: #3c3c3c; opacity: 1; }
.apps { display: flex; }
.app { position: relative; width: 43px; }
.app.open::after { content: ""; position: absolute; left: 4px; right: 4px; bottom: 0; height: 2px; background: #83b7e3; }
.app.active { background: #666a6c; }
.app.active::after { left: 0; right: 0; }
.tray { display: flex; align-items: center; margin-left: auto; padding-right: 4px; }
.weather { display: flex; align-items: center; gap: 6px; margin-right: 12px; font-size: 12px; white-space: nowrap; }
.tray button { margin-right: 8px; }
.clock { display: flex; flex-direction: column; align-items: center; font-size: 10px; line-height: 15px; margin: 0 16px 0 0; }
.tray .notif { position: relative; width: 22px; height: 34px; margin-right: 9px; justify-items: start; }
.count { position: absolute; right: 0; bottom: 3px; width: 15px; height: 15px; border-radius: 50%; border: 1px solid #999; background: #333; font-size: 10px; line-height: 13px; }
</style>
